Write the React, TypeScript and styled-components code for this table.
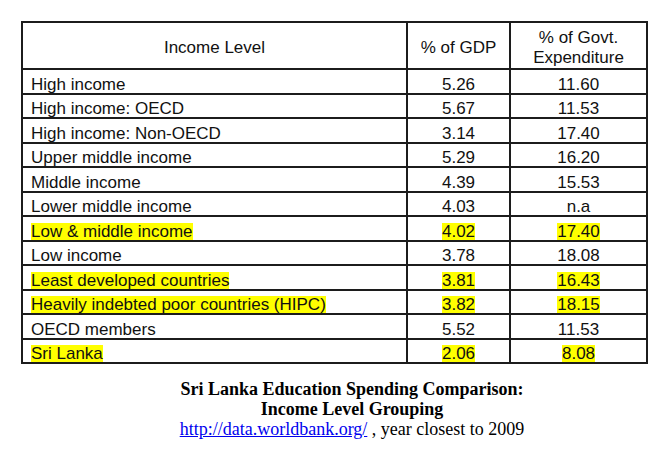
import styled, { createGlobalStyle } from 'styled-components';

const GlobalStyle = createGlobalStyle`
  html, body {
    margin: 0;
    padding: 0;
    background: #ffffff;
  }
`;

const Page = styled.div`
  padding: 21px 0 0 21px;
  display: flex;
  flex-direction: column;
  align-items: flex-start;
`;

const Table = styled.table`
  border-collapse: collapse;
  table-layout: fixed;
  width: 627px;
  font-family: 'Liberation Sans', Arial, sans-serif;
  font-size: 17px;
  color: #111;
  border: 2px solid #1c1c1c;
`;

const HeadCell = styled.th`
  border: 2px solid #1c1c1c;
  font-weight: normal;
  text-align: center;
  vertical-align: middle;
  line-height: 20px;
  padding: 5px 4px 0;
`;

const HeadRow = styled.tr`
  height: 43px;
`;

const Row = styled.tr`
  height: 24.5px;
`;

const Cell = styled.td<{ $align?: 'left' | 'center' }>`
  border: 2px solid #1c1c1c;
  text-align: ${(p) => p.$align ?? 'center'};
  vertical-align: bottom;
  padding: 0 ${(p) => (p.$align === 'left' ? '8px' : '2px')} 0;
  line-height: 17px;
  white-space: nowrap;
`;

const Mark = styled.span<{ $lit?: boolean }>`
  display: inline-block;
  height: 17px;
  line-height: 17px;
  background: ${(p) => (p.$lit ? '#ffff00' : 'transparent')};
`;

const Caption = styled.div`
  width: 662px;
  margin-top: 15px;
  text-align: center;
  font-family: 'Liberation Serif', 'Times New Roman', serif;
  font-size: 18px;
  line-height: 20px;
  color: #000;
`;

const CaptionTitle = styled.div`
  font-weight: bold;
`;

const Link = styled.a`
  color: #0000ee;
  text-decoration: underline;
`;

const rows: { label: string; gdp: string; govt: string; lit?: boolean }[] = [
  { label: 'High income', gdp: '5.26', govt: '11.60' },
  { label: 'High income: OECD', gdp: '5.67', govt: '11.53' },
  { label: 'High income: Non-OECD', gdp: '3.14', govt: '17.40' },
  { label: 'Upper middle income', gdp: '5.29', govt: '16.20' },
  { label: 'Middle income', gdp: '4.39', govt: '15.53' },
  { label: 'Lower middle income', gdp: '4.03', govt: 'n.a' },
  { label: 'Low & middle income', gdp: '4.02', govt: '17.40', lit: true },
  { label: 'Low income', gdp: '3.78', govt: '18.08' },
  { label: 'Least developed countries', gdp: '3.81', govt: '16.43', lit: true },
  { label: 'Heavily indebted poor countries (HIPC)', gdp: '3.82', govt: '18.15', lit: true },
  { label: 'OECD members', gdp: '5.52', govt: '11.53' },
  { label: 'Sri Lanka', gdp: '2.06', govt: '8.08', lit: true },
];

export default function App() {
  return (
    <>
      <GlobalStyle />
      <Page>
        <Table>
          <colgroup>
            <col style={{ width: 385 }} />
            <col style={{ width: 103 }} />
            <col style={{ width: 137 }} />
          </colgroup>
          <thead>
            <HeadRow>
              <HeadCell>Income Level</HeadCell>
              <HeadCell>% of GDP</HeadCell>
              <HeadCell>
                % of Govt.
                <br />
                Expenditure
              </HeadCell>
            </HeadRow>
          </thead>
          <tbody>
            {rows.map((r) => (
              <Row key={r.label}>
                <Cell $align="left">
                  <Mark $lit={r.lit}>{r.label}</Mark>
                </Cell>
                <Cell>
                  <Mark $lit={r.lit}>{r.gdp}</Mark>
                </Cell>
                <Cell>
                  <Mark $lit={r.lit}>{r.govt}</Mark>
                </Cell>
              </Row>
            ))}
          </tbody>
        </Table>
        <Caption>
          <CaptionTitle>Sri Lanka Education Spending Comparison:</CaptionTitle>
          <CaptionTitle>Income Level Grouping</CaptionTitle>
          <div>
            <Link href="#">http://data.worldbank.org/</Link> , year closest to 2009
          </div>
        </Caption>
      </Page>
    </>
  );
}
